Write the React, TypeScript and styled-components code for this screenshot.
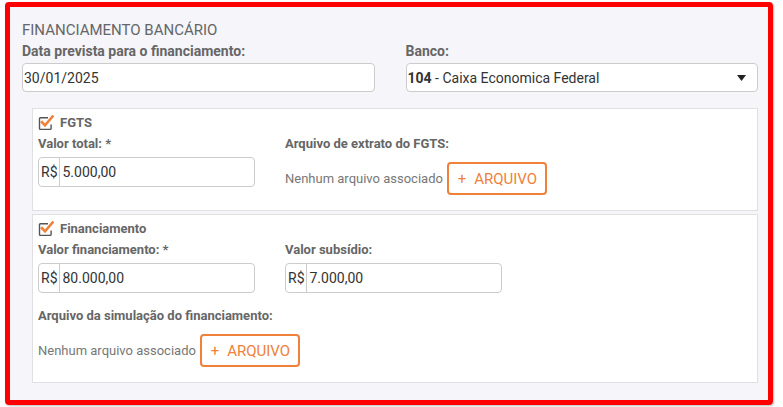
import React from "react";
import styled, { createGlobalStyle } from "styled-components";

const GlobalStyle = createGlobalStyle`
  html, body { margin: 0; padding: 0; background: #ffffff; }
  body { font-family: Roboto, "Liberation Sans", Arial, sans-serif; }
  * { box-sizing: border-box; }
`;

const Frame = styled.div`
  padding: 2px 10px 2px 5px;
`;

const Highlight = styled.div`
  border: 5px solid #ff0000;
  border-radius: 4px;
  box-shadow: 1px 1px 2px rgba(0, 0, 0, 0.25);
`;

const Panel = styled.div`
  background: #f5f5fa;
  padding: 13px 10px 17px 12px;
`;

const Title = styled.div`
  font-size: 15px;
  line-height: 20px;
  color: #666;
  text-transform: uppercase;
`;

const TwoCols = styled.div`
  display: grid;
  grid-template-columns: 1fr 1fr;
  column-gap: 31px;
  margin-top: 1px;
`;

const Label = styled.div<{ $gap?: number; $small?: boolean }>`
  font-size: ${(p) => (p.$small ? 13 : 14)}px;
  line-height: 20px;
  font-weight: 700;
  color: #666;
  white-space: nowrap;
  margin-top: ${(p) => p.$gap ?? 0}px;
`;

const TextBox = styled.div`
  margin-top: 2px;
  height: 29px;
  background: #fff;
  border: 1px solid #ccc;
  border-radius: 4px;
  display: flex;
  align-items: center;
  padding: 0 1px;
  font-size: 14px;
  color: #333;
`;

const SelectBox = styled(TextBox)`
  justify-content: space-between;
  padding: 0 11px 0 1px;
  b { font-weight: 700; }
`;

const Section = styled.div<{ $first?: boolean }>`
  margin: ${(p) => (p.$first ? "16px" : "3px")} 0 0 10px;
  background: #fff;
  border: 1px solid #e0e0e4;
  padding: 3px 6px 15px 5px;
`;

const SectionHeader = styled.div`
  display: flex;
  align-items: center;
  gap: 6px;
  font-size: 13px;
  line-height: 22px;
  font-weight: 700;
  color: #666;
`;

const FieldGrid = styled.div`
  display: grid;
  grid-template-columns: 217px 217px;
  column-gap: 30px;
`;

const MoneyGroup = styled.div`
  margin-top: 3px;
  height: 30px;
  display: flex;
  background: #fff;
  border: 1px solid #ccc;
  border-radius: 4px;
  overflow: hidden;
  font-size: 14px;
  color: #333;
`;

const Addon = styled.span`
  display: flex;
  align-items: center;
  padding: 0 1px 0 2px;
  border-right: 1px solid #ccc;
  color: #333;
`;

const MoneyValue = styled.span`
  display: flex;
  align-items: center;
  padding-left: 3px;
`;

const FileRow = styled.div<{ $gap: number }>`
  margin-top: ${(p) => p.$gap}px;
  display: flex;
  align-items: center;
  gap: 4px;
  font-size: 13px;
  color: #777;
  white-space: nowrap;
`;

const FileButton = styled.button`
  flex-shrink: 0;
  height: 33px;
  width: 100px;
  border: 2px solid #f0813a;
  border-radius: 4px;
  background: #fff;
  color: #f0813a;
  font-family: inherit;
  font-size: 15px;
  padding: 0 0 0 1px;
  display: flex;
  align-items: center;
  justify-content: center;
  gap: 8px;
  cursor: pointer;
`;

const CheckIcon = () => (
  <svg width="16" height="16" viewBox="0 0 16 16" aria-hidden>
    <path d="M10 2.8H2.3c-.5 0-.8.3-.8.8v10c0 .5.3.8.8.8h10c.5 0 .8-.3.8-.8V9.5" fill="none" stroke="#555" strokeWidth="1.4" />
    <path d="M4 7.2l3 3.2L14.6 1.5" fill="none" stroke="#f0813a" strokeWidth="2.6" strokeLinecap="square" />
  </svg>
);

const Caret = () => (
  <svg width="9" height="6" viewBox="0 0 9 6" aria-hidden>
    <path d="M0 0h9L4.5 6z" fill="#222" />
  </svg>
);

const Money = ({ value }: { value: string }) => (
  <MoneyGroup>
    <Addon>R$</Addon>
    <MoneyValue>{value}</MoneyValue>
  </MoneyGroup>
);

const FileField = ({ gap }: { gap: number }) => (
  <FileRow $gap={gap}>
    <span>Nenhum arquivo associado</span>
    <FileButton>
      <span>+</span>
      <span>ARQUIVO</span>
    </FileButton>
  </FileRow>
);

export default function App() {
  return (
    <>
      <GlobalStyle />
      <Frame>
        <Highlight>
          <Panel>
            <Title>Financiamento Bancário</Title>
            <TwoCols>
              <div>
                <Label>Data prevista para o financiamento:</Label>
                <TextBox>30/01/2025</TextBox>
              </div>
              <div>
                <Label>Banco:</Label>
                <SelectBox>
                  <span>
                    <b>104</b> - Caixa Economica Federal
                  </span>
                  <Caret />
                </SelectBox>
              </div>
            </TwoCols>

            <Section $first>
              <SectionHeader>
                <CheckIcon />
                <span>FGTS</span>
              </SectionHeader>
              <FieldGrid>
                <div>
                  <Label $small>Valor total: *</Label>
                  <Money value="5.000,00" />
                </div>
                <div>
                  <Label $small>Arquivo de extrato do FGTS:</Label>
                  <FileField gap={8} />
                </div>
              </FieldGrid>
            </Section>

            <Section>
              <SectionHeader>
                <CheckIcon />
                <span>Financiamento</span>
              </SectionHeader>
              <FieldGrid>
                <div>
                  <Label $small>Valor financiamento: *</Label>
                  <Money value="80.000,00" />
                </div>
                <div>
                  <Label $small>Valor subsídio:</Label>
                  <Money value="7.000,00" />
                </div>
              </FieldGrid>
              <Label $small $gap={13}>Arquivo da simulação do financiamento:</Label>
              <FileField gap={8} />
            </Section>
          </Panel>
        </Highlight>
      </Frame>
    </>
  );
}
